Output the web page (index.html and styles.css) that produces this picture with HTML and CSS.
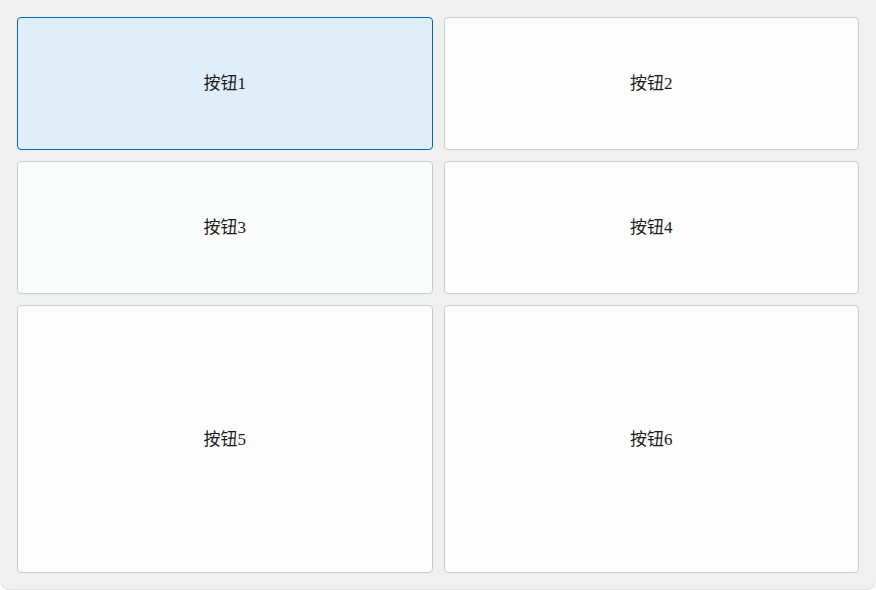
FILE: index.html
```html
<!DOCTYPE html>
<html lang="zh-CN">
<head>
    <meta charset="UTF-8">
    <meta name="viewport" content="width=device-width, initial-scale=1.0">
    <title>按钮</title>
    <link rel="stylesheet" href="styles.css">
</head>
<body>
    <div class="window">
        <div class="grid">
            <button class="btn focused">按钮1</button>
            <button class="btn">按钮2</button>
            <button class="btn alt">按钮3</button>
            <button class="btn">按钮4</button>
            <button class="btn">按钮5</button>
            <button class="btn">按钮6</button>
        </div>
    </div>
</body>
</html>
```

FILE: styles.css
```css
html {
    background-color: #ffffff;
}
body {
    margin: 0;
    width: 876px;
    height: 590px;
    font-family: "Liberation Serif", "Noto Sans CJK SC", serif;
}
.window {
    box-sizing: border-box;
    width: 100%;
    height: 100%;
    padding: 17px;
    background-color: #f0f0f0;
    border-radius: 0 0 9px 9px;
    box-shadow: inset 0 -1px 0 #e2e2e2;
}
.grid {
    display: grid;
    grid-template-columns: 1fr 1fr;
    grid-template-rows: 133px 133px 1fr;
    gap: 11px;
    height: 100%;
}
.btn {
    display: flex;
    align-items: center;
    justify-content: center;
    padding: 0 0 4px;
    background-color: #fdfdfd;
    border: 1px solid #cccccc;
    border-radius: 4px;
    color: #1a1a1a;
    font-family: inherit;
    font-size: 17px;
}
.btn.alt {
    background-color: #fbfcfc;
}
.btn.focused {
    background-color: #e0eef9;
    border-color: #0067c0;
}
```
